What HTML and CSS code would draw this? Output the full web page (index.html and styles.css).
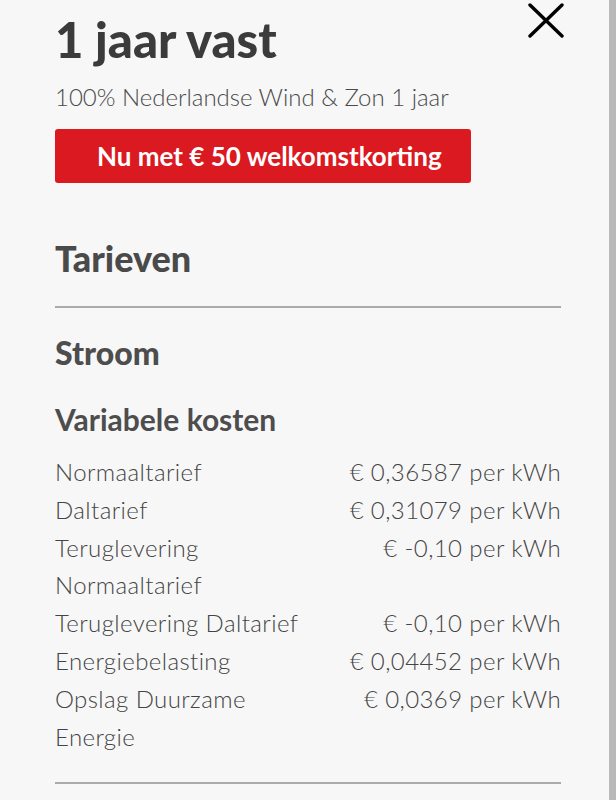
FILE: index.html
```html
<!DOCTYPE html>
<html lang="nl">
<head>
<meta charset="utf-8">
<link rel="stylesheet" href="styles.css">
</head>
<body>
<div class="page">
  <div class="panel">
    <button class="close" aria-label="Sluiten">
      <svg width="38" height="36" viewBox="0 0 38 36"><path d="M3 3 L35 34 M35 3 L3 34" stroke="#000" stroke-width="3.4" stroke-linecap="round" fill="none"/></svg>
    </button>
    <h1 class="title">1 jaar vast</h1>
    <p class="subtitle">100% Nederlandse Wind &amp; Zon 1 jaar</p>
    <div class="promo">Nu met € 50 welkomstkorting</div>
    <h2 class="section">Tarieven</h2>
    <hr class="rule">
    <h3 class="sub">Stroom</h3>
    <h4 class="group">Variabele kosten</h4>
    <div class="rates">
      <div class="label">Normaaltarief</div><div class="value">€ 0,36587 per kWh</div>
      <div class="label">Daltarief</div><div class="value">€ 0,31079 per kWh</div>
      <div class="label">Teruglevering Normaaltarief</div><div class="value">€ -0,10 per kWh</div>
      <div class="label">Teruglevering Daltarief</div><div class="value">€ -0,10 per kWh</div>
      <div class="label">Energiebelasting</div><div class="value">€ 0,04452 per kWh</div>
      <div class="label">Opslag Duurzame Energie</div><div class="value">€ 0,0369 per kWh</div>
    </div>
    <hr class="rule bottom">
  </div>
  <div class="scrollbar"></div>
</div>
</body>
</html>
```
FILE: styles.css
```css
html, body {
  margin: 0;
  padding: 0;
  background: #f7f7f7;
  height: 100%;
  overflow: hidden;
}
.page {
  display: flex;
  height: 800px;
  font-family: "Lato", "Noto Sans", sans-serif;
  color: #555;
}
.panel {
  position: relative;
  flex: 1;
  padding: 14px 48px 0 55px;
}
.scrollbar {
  width: 7px;
  background: #b9b9b9;
}
.close {
  position: absolute;
  top: 2px;
  right: 44px;
  border: 0;
  background: none;
  padding: 0;
  margin: 0;
}
.close svg { display: block; }
.title {
  margin: 0;
  font-size: 49px;
  line-height: 50px;
  font-weight: 900;
  color: #3b3b3b;
}
.subtitle {
  margin: 18px 0 0;
  font-size: 24px;
  line-height: 30px;
  font-weight: 300;
  color: #4a4a4a;
}
.promo {
  margin-top: 17px;
  width: 416px;
  height: 54px;
  box-sizing: border-box;
  background: #db1920;
  border-radius: 3px;
  color: #fff;
  font-size: 26px;
  font-weight: 700;
  line-height: 54px;
  padding-left: 42px;
}
.section {
  margin: 57px 0 0;
  font-size: 36px;
  line-height: 36px;
  font-weight: 900;
  color: #4a4a4a;
}
.rule {
  margin: 30px 0 0;
  border: 0;
  height: 2px;
  background: #aaa;
}
.sub {
  margin: 28px 0 0;
  font-size: 32px;
  line-height: 34px;
  font-weight: 900;
  color: #4d4d4d;
}
.group {
  margin: 32px 0 0;
  font-size: 30px;
  line-height: 34px;
  font-weight: 700;
  color: #4d4d4d;
}
.rates {
  margin-top: 17px;
  display: grid;
  grid-template-columns: 1fr 1fr;
  font-size: 24px;
  line-height: 37.8px;
  font-weight: 300;
  letter-spacing: 0.4px;
  color: #444;
}
.value { text-align: right; }
.rule.bottom { margin-top: 27px; }
```
